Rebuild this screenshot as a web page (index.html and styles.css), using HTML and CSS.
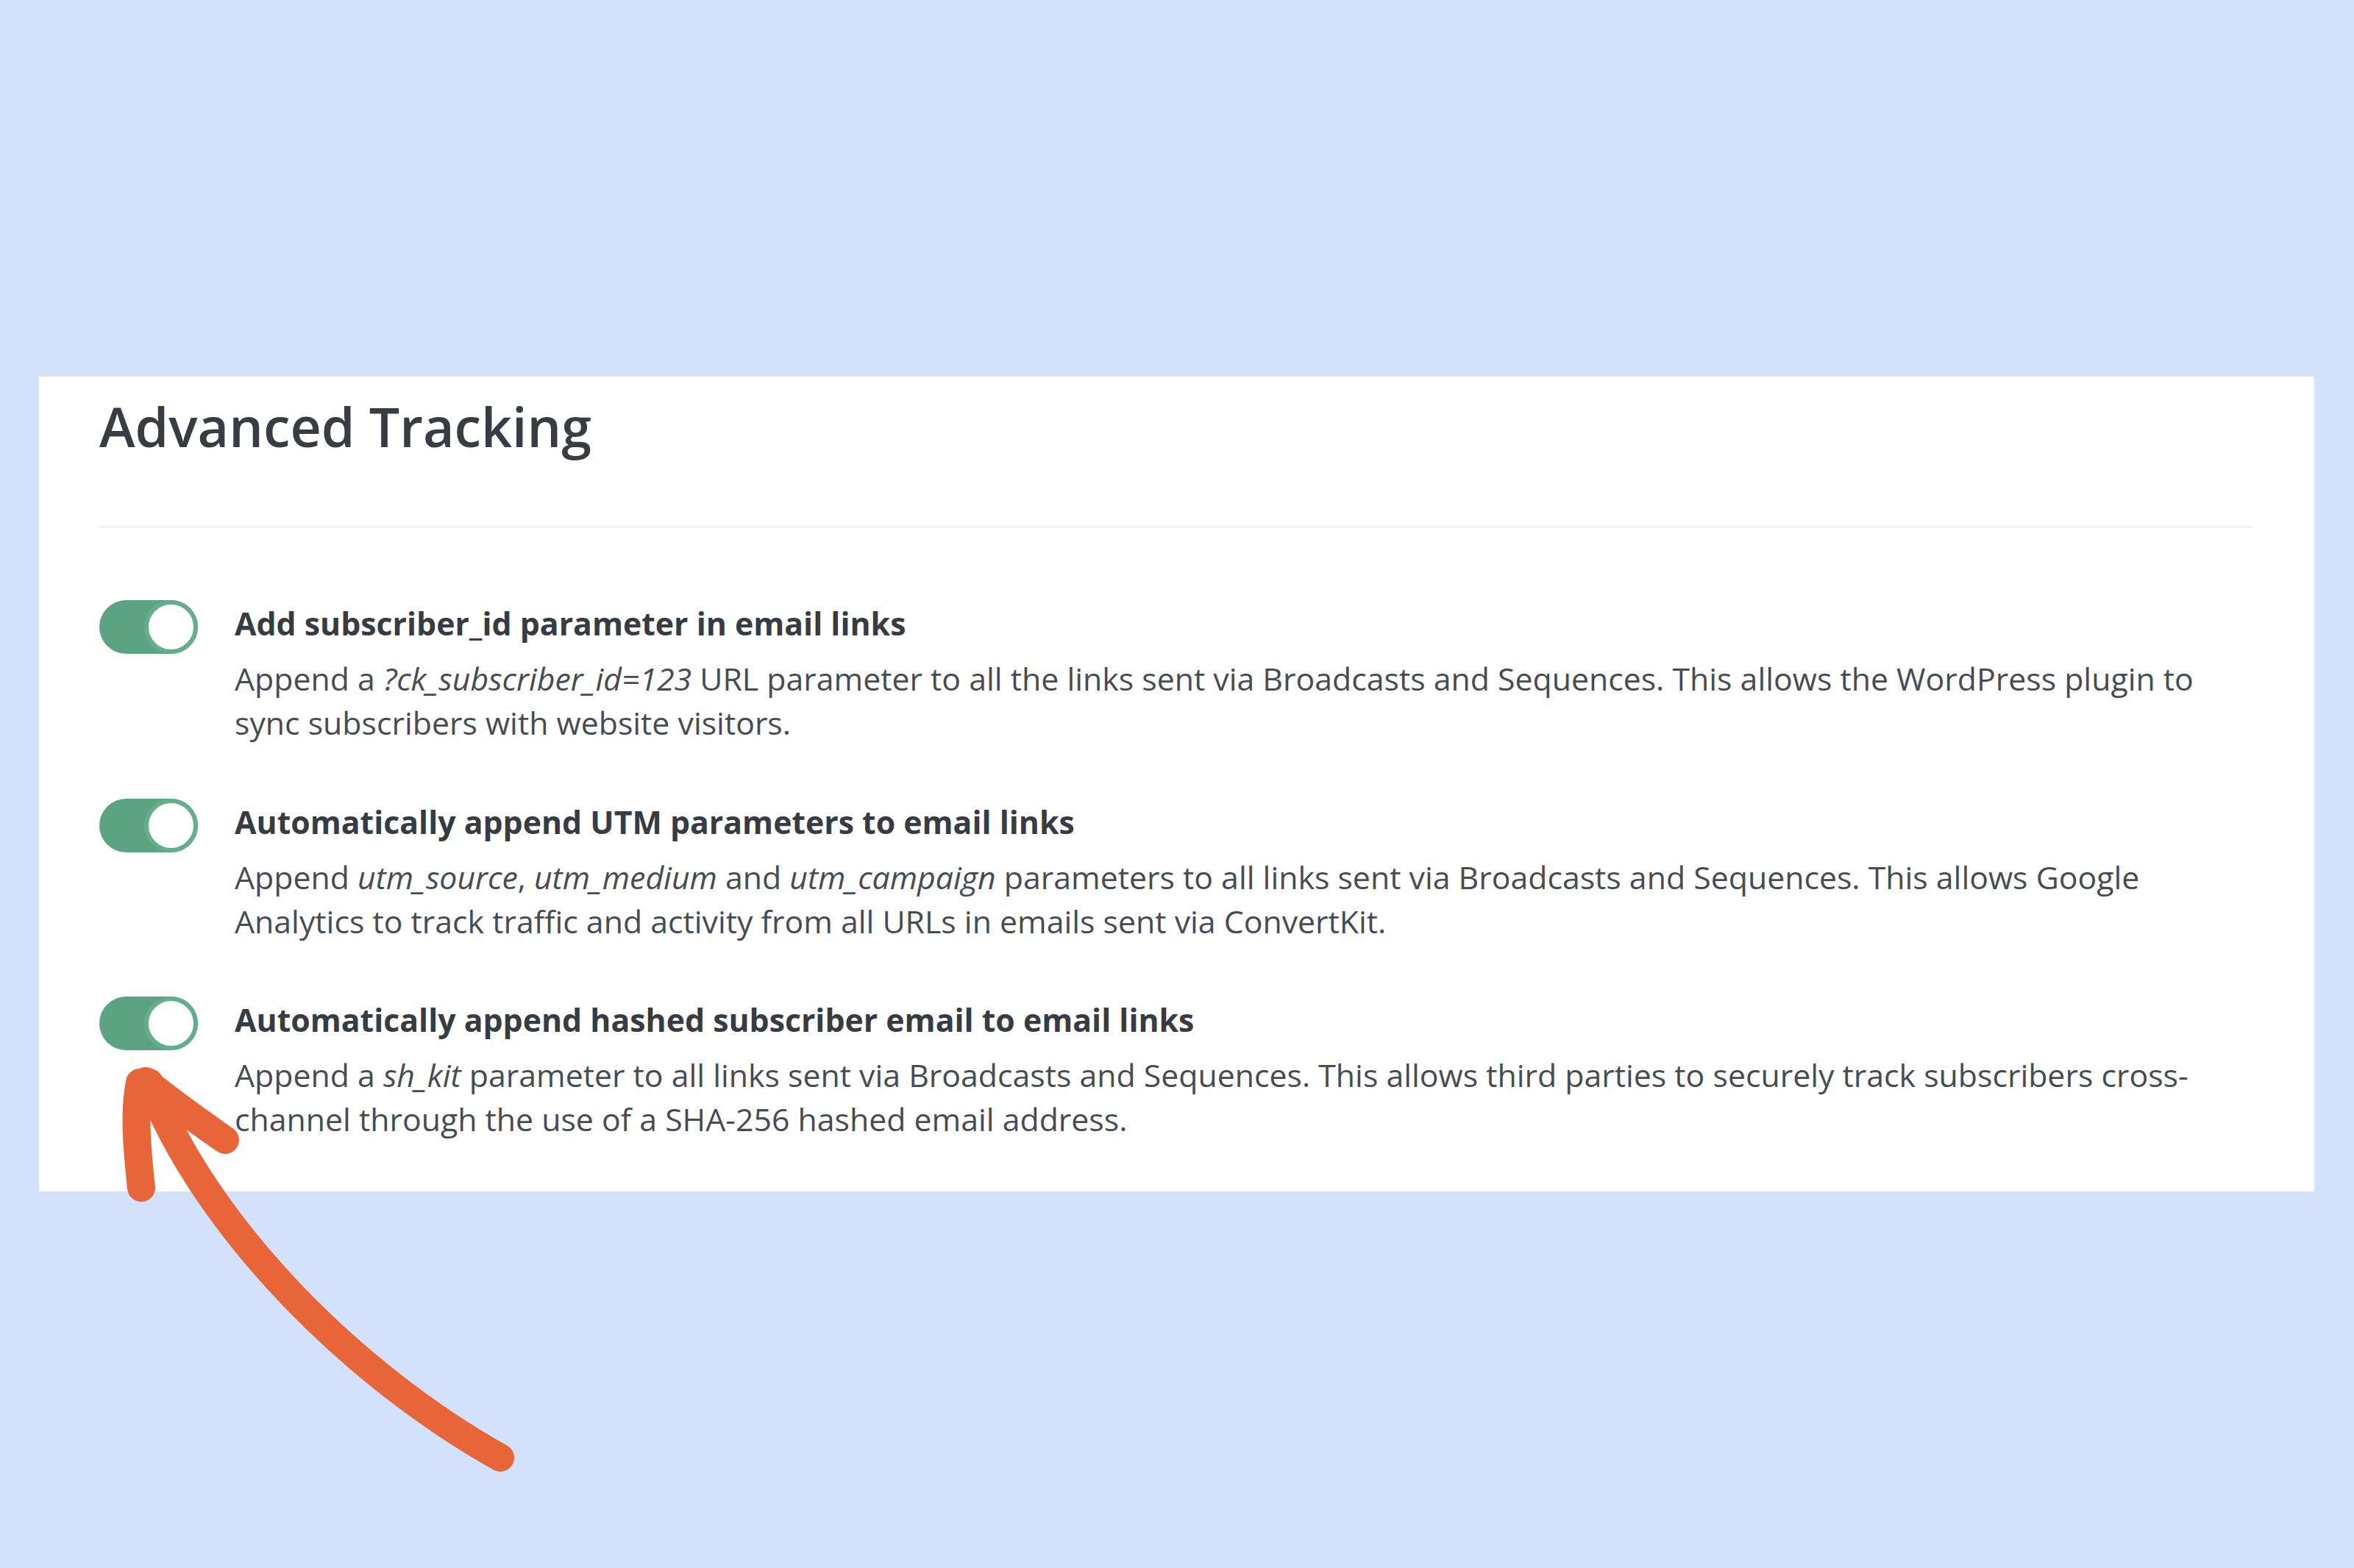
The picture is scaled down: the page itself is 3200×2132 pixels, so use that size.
FILE: index.html
```html
<!DOCTYPE html>
<html lang="en">
<head>
<meta charset="utf-8">
<title>Advanced Tracking</title>
<link rel="stylesheet" href="styles.css">
</head>
<body>
<main class="page">
  <section class="card">
    <h2 class="card-title">Advanced Tracking</h2>
    <hr class="divider">
    <ul class="settings">
      <li class="setting">
        <span class="toggle is-on"><span class="knob"></span></span>
        <div class="setting-body">
          <h3 class="setting-label">Add subscriber_id parameter in email links</h3>
          <p class="setting-desc">Append a <em>?ck_subscriber_id=123</em> URL parameter to all the links sent via Broadcasts and Sequences. This allows the WordPress plugin to sync subscribers with website visitors.</p>
        </div>
      </li>
      <li class="setting">
        <span class="toggle is-on"><span class="knob"></span></span>
        <div class="setting-body">
          <h3 class="setting-label">Automatically append UTM parameters to email links</h3>
          <p class="setting-desc">Append <em>utm_source</em>, <em>utm_medium</em> and <em>utm_campaign</em> parameters to all links sent via Broadcasts and Sequences. This allows Google Analytics to track traffic and activity from all URLs in emails sent via ConvertKit.</p>
        </div>
      </li>
      <li class="setting">
        <span class="toggle is-on"><span class="knob"></span></span>
        <div class="setting-body">
          <h3 class="setting-label">Automatically append hashed subscriber email to email links</h3>
          <p class="setting-desc">Append a <em>sh_kit</em> parameter to all links sent via Broadcasts and Sequences. This allows third parties to securely track subscribers cross-channel through the use of a SHA-256 hashed email address.</p>
        </div>
      </li>
    </ul>
  </section>
</main>
<svg class="annotation-arrow" width="3200" height="2132" viewBox="0 0 3200 2132" aria-hidden="true">
  <g fill="none" stroke="#e76539" stroke-width="38" stroke-linecap="round" stroke-linejoin="round">
    <path d="M 680 1982 C 480 1870 280 1670 203 1472"/>
    <path d="M 192 1615 C 186 1560 182 1510 190 1472"/>
    <path d="M 306 1550 C 270 1525 235 1500 198 1470"/>
  </g>
</svg>
</body>
</html>
```

FILE: styles.css
```css
html, body {
  margin: 0;
  padding: 0;
}

body {
  width: 3200px;
  height: 2132px;
  position: relative;
  overflow: hidden;
  background: #d3e2fa;
  font-family: "Open Sans", "Noto Sans", sans-serif;
  color: #383d43;
}

.page {
  padding: 512px 54px 0 53px;
}

.card {
  background: #ffffff;
  padding: 24px 85px 68px 82px;
}

.card-title {
  margin: 0;
  font-size: 73.5px;
  font-weight: 600;
  line-height: 1.2;
  color: #383d43;
}

.divider {
  border: 0;
  height: 3px;
  background: #eef0f4;
  margin: 91px 0 98px;
}

.settings {
  list-style: none;
  margin: 0;
  padding: 0;
  display: flex;
  flex-direction: column;
  gap: 72.5px;
}

.setting {
  display: flex;
  align-items: flex-start;
  gap: 50px;
}

.toggle {
  flex: none;
  width: 134px;
  height: 73px;
  border-radius: 37px;
  background: #5ca382;
  display: flex;
  justify-content: flex-end;
}

.knob {
  width: 73px;
  height: 73px;
  box-sizing: border-box;
  border-radius: 50%;
  border: 6px solid #64ae8b;
  background: #ffffff;
}

.setting-body {
  flex: 1;
  min-width: 0;
}

.setting-label {
  margin: 2px 0 0;
  font-size: 42.8px;
  font-weight: 700;
  line-height: 60px;
  color: #373c42;
}

.setting-desc {
  margin: 15px 0 0;
  font-size: 42.8px;
  font-weight: 400;
  line-height: 60px;
  color: #464c52;
}

.setting-desc em {
  font-style: italic;
}

.annotation-arrow {
  position: absolute;
  left: 0;
  top: 0;
  pointer-events: none;
}
```
